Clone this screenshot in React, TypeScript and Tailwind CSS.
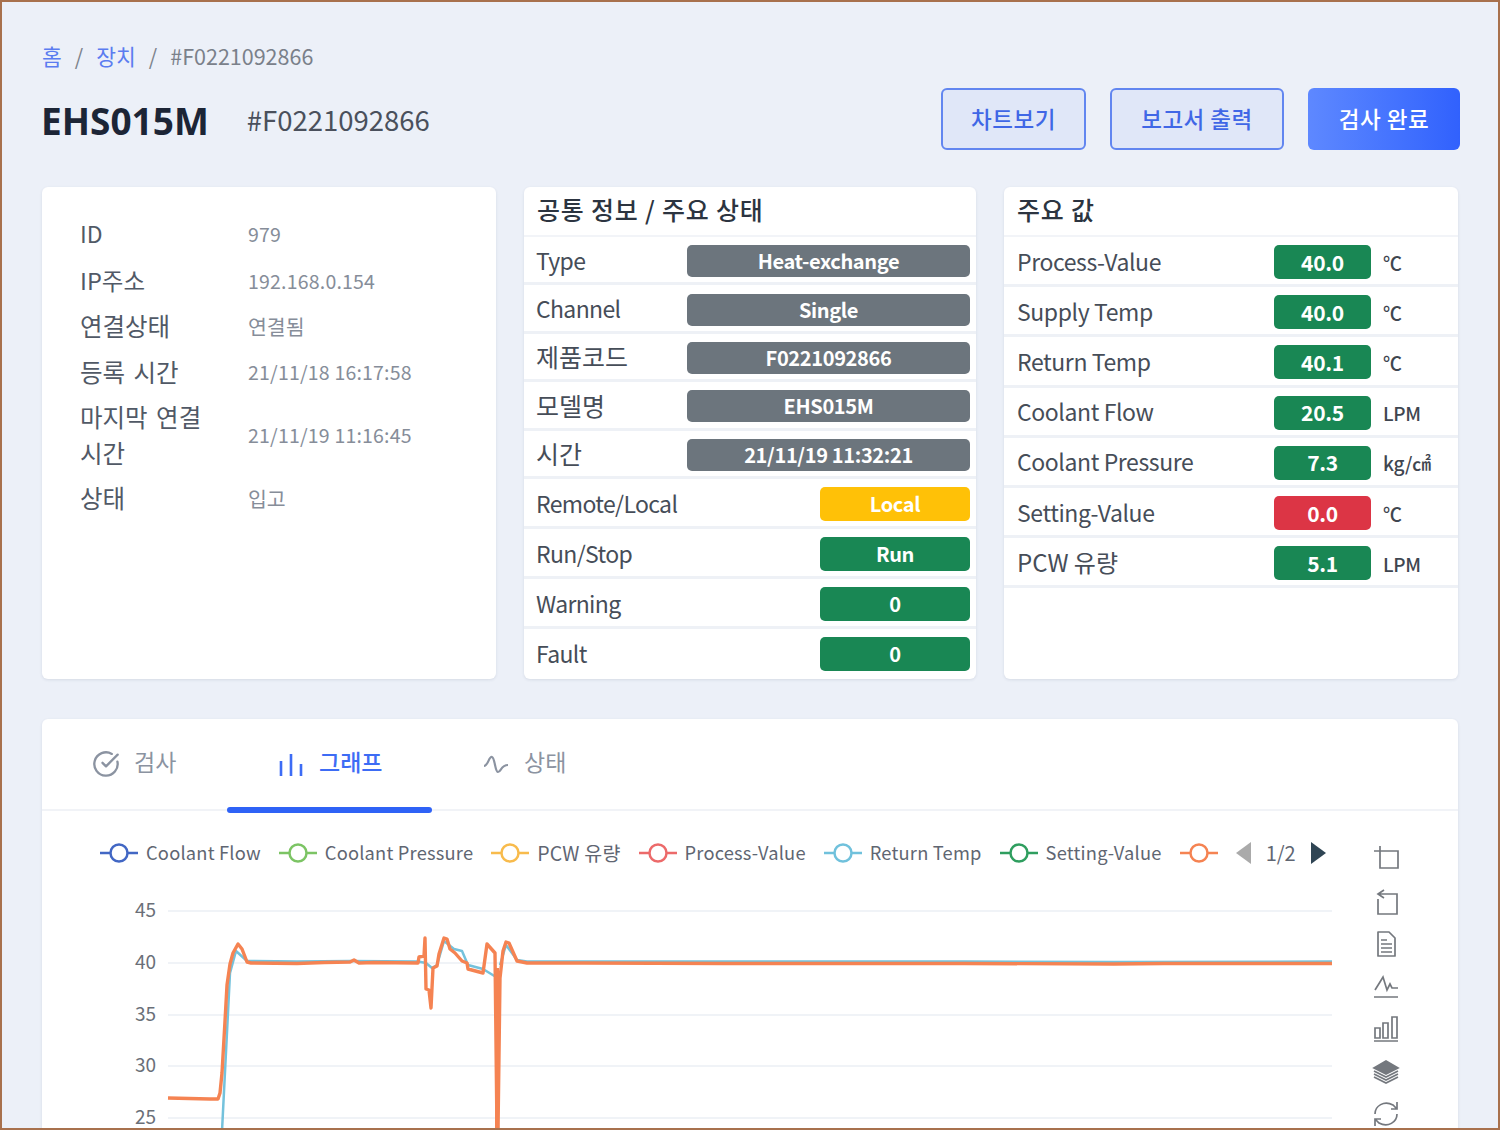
import React from "react";
import { CircleCheckBig } from "lucide-react";

const infoRows: [string, string][] = [
  ["ID", "979"],
  ["IP주소", "192.168.0.154"],
  ["연결상태", "연결됨"],
  ["등록 시간", "21/11/18 16:17:58"],
  ["마지막 연결 시간", "21/11/19 11:16:45"],
  ["상태", "입고"],
];
const wide: [string, string][] = [
  ["Type", "Heat-exchange"],
  ["Channel", "Single"],
  ["제품코드", "F0221092866"],
  ["모델명", "EHS015M"],
  ["시간", "21/11/19 11:32:21"],
];
const narrow: [string, string, string][] = [
  ["Remote/Local", "Local", "bg-[#ffc107]"],
  ["Run/Stop", "Run", "bg-[#198754]"],
  ["Warning", "0", "bg-[#198754]"],
  ["Fault", "0", "bg-[#198754]"],
];
const values: [string, string, string, boolean][] = [
  ["Process-Value", "40.0", "℃", false],
  ["Supply Temp", "40.0", "℃", false],
  ["Return Temp", "40.1", "℃", false],
  ["Coolant Flow", "20.5", "LPM", false],
  ["Coolant Pressure", "7.3", "kg/㎠", false],
  ["Setting-Value", "0.0", "℃", true],
  ["PCW 유량", "5.1", "LPM", false],
];
const legend: [string, string][] = [
  ["Coolant Flow", "#4267c4"],
  ["Coolant Pressure", "#7cc464"],
  ["PCW 유량", "#f8bb4c"],
  ["Process-Value", "#ec6a6a"],
  ["Return Temp", "#70c1dc"],
  ["Setting-Value", "#2f9e5f"],
  ["", "#f58352"],
];

function labelClass(k: string, tight: boolean) {
  if (/^[가-힣 ]+$/.test(k)) return "mb-[2px] text-[25px] leading-none text-[#464d58]";
  if (/[가-힣]/.test(k)) return "mb-[2px] text-[24px] leading-none text-[#464d58]";
  return tight
    ? "mb-[2px] text-[23px] leading-none tracking-[-0.65px] text-[#464d58]"
    : "mb-[2px] text-[23px] leading-none tracking-[-0.4px] text-[#464d58]";
}

const orange =
  "M4 225 L46 226 L54 226 L56 220 L58 200 L61 148 L63 112 L66 91 L69 80 L74 71 L78 76 L83 89 L87 90 L133 90.5 L160 89.5 L186 89 L190 87 L195 90 L210 89.5 L254 90 L255 84 L260 83 L261 65 L262 116 L265 117 L267 135 L269 95 L273 93 L275 81 L280 65 L283 66 L286 76 L291 80 L298 88 L303 90 L304 96 L319 100 L323 71 L331 80 L333 258 L334 258 L336 105 L339 78 L342 69 L345 70 L353 88 L363 90 L420 90 L560 90.5 L800 90.5 L950 91 L1000 90.5 L1168 90.5";
const blue =
  "M58 258 L66 100 L72 78 L83 88 L133 88.5 L186 88 L254 88.5 L262 90 L268 95 L273 92 L280 68 L290 76 L298 78 L304 92 L319 96 L332 104 L334 258 M336 92 L342 72 L353 87 L363 88.5 L420 88.5 L800 88.5 L950 89 L1168 88.5";

function Legend({ name, color }: { name: string; color: string }) {
  return (
    <div className="flex items-center gap-[8px] whitespace-nowrap">
      <svg width="38" height="20" viewBox="0 0 38 20" fill="none" stroke={color} strokeWidth="2.5" className="shrink-0">
        <path d="M0 10H10M28 10H38" />
        <circle cx="19" cy="10" r="8.5" />
      </svg>
      {name && (
        <span
          className={
            /[가-힣]/.test(name)
              ? "text-[19.5px] leading-none tracking-[0.2px] text-[#5f6672]"
              : "text-[18.3px] leading-none tracking-[0.2px] text-[#5f6672]"
          }
        >
          {name}
        </span>
      )}
    </div>
  );
}

function Tool({ children }: { children: React.ReactNode }) {
  return (
    <svg width="28" height="28" viewBox="0 0 28 28" fill="none" stroke="#74787e" strokeWidth="1.7">
      {children}
    </svg>
  );
}

export default function App() {
  return (
    <div
      className="h-[1130px] w-[1500px] overflow-hidden border-2 border-[#a8714d] bg-[#ecf0f8] px-[40px] pt-[39px] text-[#3d4450]"
      style={{ fontFamily: '"Noto Sans CJK KR", "Noto Sans", sans-serif' }}
    >
      <div className="flex h-[30px] items-center text-[21.5px] leading-none">
        <span className="text-[#5b7cf0]">홈</span>
        <span className="mx-[13px] text-[#7d838c]">/</span>
        <span className="text-[#5b7cf0]">장치</span>
        <span className="mx-[13px] text-[#7d838c]">/</span>
        <span className="text-[#7a808a]">#F0221092866</span>
      </div>

      <div className="mt-[17px] flex h-[62px] items-center">
        <h1 className="ml-[-1px] mt-[2px] text-[37px] font-bold leading-none text-[#1c2536]" style={{ fontFamily: '"Noto Sans", sans-serif' }}>
          EHS015M
        </h1>
        <span className="ml-[38px] mt-[2px] text-[27.5px] leading-none text-[#4a505c]">#F0221092866</span>
        <div className="ml-auto mr-[-2px] flex gap-[24px]">
          <button className="h-[62px] w-[145px] rounded-[6px] border-2 border-[#6286f0] bg-[#e0e7f8] text-[22.5px] font-medium tracking-[0.5px] text-[#4067e6]">
            차트보기
          </button>
          <button className="h-[62px] w-[174px] rounded-[6px] border-2 border-[#6286f0] bg-[#e0e7f8] text-[22.5px] font-medium tracking-[0.5px] text-[#4067e6]">
            보고서 출력
          </button>
          <button className="h-[62px] w-[152px] rounded-[6px] bg-gradient-to-r from-[#5e88ff] to-[#3161fd] text-[22.5px] font-medium tracking-[0.5px] text-white">
            검사 완료
          </button>
        </div>
      </div>

      <div className="mt-[37px] grid h-[492px] grid-cols-[454px_452px_454px] gap-x-[28px]">
        <div className="rounded-[6px] bg-white px-[38px] pt-[23px] shadow-[0_1px_3px_rgba(60,70,100,0.12)]">
          {infoRows.map(([k, v]) => (
            <div key={k} className="flex items-center py-[5px]">
              <div className="w-[168px] shrink-0 break-keep pr-[30px] text-[24.5px] leading-[35.5px] text-[#515966] [word-spacing:3px]">
                <span className={k === "ID" ? "text-[23px]" : k === "IP주소" ? "text-[23.5px]" : ""}>{k}</span>
              </div>
              <div
                className={
                  /[가-힣]/.test(v)
                    ? "mt-[1px] text-[20.5px] leading-none text-[#868d99]"
                    : "mt-[1px] text-[19.5px] leading-none tracking-[0.2px] text-[#868d99]"
                }
              >
                {v}
              </div>
            </div>
          ))}
        </div>

        <div className="flex flex-col overflow-hidden rounded-[6px] bg-white shadow-[0_1px_3px_rgba(60,70,100,0.12)]">
          <div className="flex h-[50px] shrink-0 items-center border-b-2 border-[#f2f4f8] px-[13px] pb-[3px] text-[25px] font-medium tracking-[0.8px] text-[#2c3440]">
            공통 정보 / 주요 상태
          </div>
          {wide.map(([k, v]) => (
            <div key={k} className="flex h-[48.4px] shrink-0 items-center justify-between border-b-[3px] border-[#eef1f6] pl-[12px] pr-[6px] pt-[3px]">
              <span className={labelClass(k, true)}>{k}</span>
              <span className="flex h-[32px] w-[283px] items-center justify-center rounded-[5px] bg-[#6c757d] text-[20px] font-bold leading-none tracking-[-0.35px] text-white">
                {v}
              </span>
            </div>
          ))}
          {narrow.map(([k, v, c], i) => (
            <div key={k} className={`flex h-[50px] shrink-0 items-center justify-between border-b-[3px] pl-[12px] pr-[6px] pt-[4px] ${i < 3 ? "border-[#eef1f6]" : "border-transparent"}`}>
              <span className={labelClass(k, true)}>{k}</span>
              <span className={`flex h-[34px] w-[150px] items-center justify-center rounded-[5px] text-[20px] font-bold leading-none tracking-[-0.35px] text-white ${c}`}>
                {v}
              </span>
            </div>
          ))}
        </div>

        <div className="overflow-hidden rounded-[6px] bg-white shadow-[0_1px_3px_rgba(60,70,100,0.12)]">
          <div className="flex h-[50px] items-center border-b-2 border-[#f2f4f8] px-[13px] pb-[3px] text-[25px] font-medium tracking-[0.8px] text-[#2c3440]">
            주요 값
          </div>
          {values.map(([k, v, u, red]) => (
            <div key={k} className="flex h-[50.2px] items-center border-b-[3px] border-[#eef1f6] pl-[13px] pt-[3px]">
              <span className={`w-[257px] ${labelClass(k, false)}`}>{k}</span>
              <span className={`flex h-[34px] w-[97px] items-center justify-center rounded-[5px] text-[21px] font-bold leading-none tracking-[-0.3px] text-white ${red ? "bg-[#dc3545]" : "bg-[#198754]"}`}>
                {v}
              </span>
              <span className="ml-[12px] text-[19px] font-medium leading-none tracking-[-0.3px] text-[#3f4650]">{u}</span>
            </div>
          ))}
        </div>
      </div>

      <div className="mt-[40px] h-[420px] rounded-[6px] bg-white pt-[1px] shadow-[0_1px_3px_rgba(60,70,100,0.12)]">
        <div className="flex h-[91px] items-stretch border-b-2 border-[#f1f3f7]">
          <div className="flex w-[185px] items-center gap-[14px] pb-[6px] pl-[50px] text-[23px] text-[#8b93a1]">
            <CircleCheckBig size={28} strokeWidth={2} className="mt-[4px] text-[#8b93a1]" />
            <span>검사</span>
          </div>
          <div className="relative flex w-[205px] items-center gap-[14px] pb-[6px] pl-[50px] text-[23px] font-medium text-[#3d6cf5]">
            <svg width="28" height="28" viewBox="0 0 28 28" fill="none" stroke="#3d6cf5" strokeWidth="2.6" className="mt-[4px]">
              <path d="M4 11V26M14 4V26M24 14V26" />
            </svg>
            <span>그래프</span>
            <div className="absolute bottom-[-4px] left-0 h-[6px] w-full rounded-full bg-[#2f62f6]" />
          </div>
          <div className="flex items-center gap-[14px] pb-[6px] pl-[50px] text-[23px] text-[#8b93a1]">
            <svg width="28" height="28" viewBox="0 0 28 28" fill="none" stroke="#8b93a1" strokeWidth="2.2" className="mt-[4px]">
              <path d="M2 16C6 16 7 6 10 7C13 8 13 22 16 22C19 22 19 15 26 15" />
            </svg>
            <span>상태</span>
          </div>
        </div>

        <div className="flex pl-[58px]">
          <div className="w-[1240px] shrink-0">
            <div className="flex h-[72px] items-center gap-[18px] pt-[11px]">
              {legend.map(([n, c], i) => (
                <Legend key={i} name={n} color={c} />
              ))}
              <div className="flex items-center gap-[15px] text-[20px] leading-none text-[#5f6672]">
                <svg width="15" height="22" viewBox="0 0 15 22"><path d="M15 0V22L0 11Z" fill="#aaaaaa" /></svg>
                <span>1/2</span>
                <svg width="15" height="22" viewBox="0 0 15 22"><path d="M0 0V22L15 11Z" fill="#2f4554" /></svg>
              </div>
            </div>
            <svg width="1240" height="248" viewBox="0 0 1240 248" fill="none" className="ml-[-4px] block">
              {[
                [45, 28],
                [40, 80],
                [35, 132],
                [30, 183],
                [25, 235],
              ].map(([t, y]) => (
                <g key={t}>
                  <path d={`M72 ${y}H1236`} stroke="#f0f3f7" strokeWidth="2" />
                  <text x="60" y={y + 6} textAnchor="end" fontSize="19" fill="#6a6f78">
                    {t}
                  </text>
                </g>
              ))}
              <g transform="translate(68 -10)">
                <path d={blue} stroke="#74c2dc" strokeWidth="2.5" strokeLinejoin="round" />
                <path d={orange} stroke="#f58352" strokeWidth="3.4" strokeLinejoin="round" />
                <path d="M333 95V258" stroke="#f58352" strokeWidth="4" />
              </g>
            </svg>
          </div>
          <div className="ml-[32px] flex flex-col gap-[14.5px] pt-[34px]">
            <Tool>
              <path d="M8 1V23H26V6H2" />
            </Tool>
            <Tool>
              <path d="M6 11V26H25V6H7M12 2L6 6L12 10" />
            </Tool>
            <Tool>
              <path d="M6 2H17L23 8V26H6ZM9 10H15M9 14H20M9 18H20M9 22H20" strokeLinejoin="round" />
            </Tool>
            <Tool>
              <path d="M3 17L8 9L11 4L15 17L18 11L20 15L26 15M2 24H26" />
            </Tool>
            <Tool>
              <path d="M3 13H8V23H3ZM11 8H16V23H11ZM20 2H25V23H20ZM2 26H26" />
            </Tool>
            <Tool>
              <path d="M14 3L26 10L14 16L2 10Z" fill="#74787e" />
              <path d="M2 13L14 19L26 13M2 16L14 22L26 16M2 19L14 25L26 19" strokeWidth="1.8" />
            </Tool>
            <Tool>
              <path d="M3 14C3 6 12 0 21 5L25 9M25 2V9H19M25 14C25 22 16 28 7 23L3 19M3 26V19H9" />
            </Tool>
          </div>
        </div>
      </div>
    </div>
  );
}
